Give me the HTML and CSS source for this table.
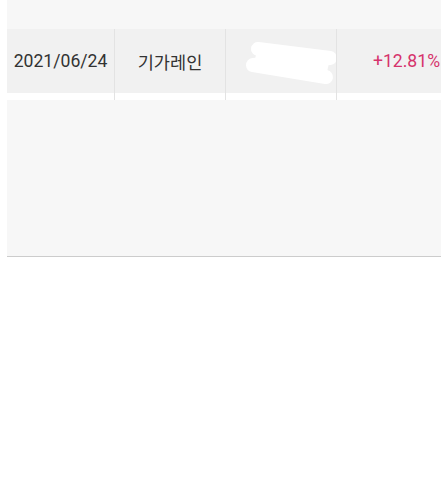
FILE: index.html
```html
<!DOCTYPE html>
<html lang="ko">
<head>
  <meta charset="UTF-8" />
  <meta name="viewport" content="width=device-width, initial-scale=1.0" />
  <title>수익률</title>
  <link rel="stylesheet" href="styles.css">
</head>
<body>
  <div class="page">
    <div class="top-band"></div>
    <div class="result-row">
      <div class="cell"><div class="val">2021/06/24</div></div>
      <div class="cell"><div class="val">기가레인</div></div>
      <div class="cell">
        <div class="val">
          <svg class="blot" viewBox="0 0 110 64" width="110" height="64">
            <polygon points="32,20 104,29 100,48 27,36" fill="#fff"/>
            <polyline points="32,20 104,29 27,36 100,48" fill="none" stroke="#fff" stroke-width="14" stroke-linecap="round" stroke-linejoin="round"/>
          </svg>
        </div>
      </div>
      <div class="cell"><div class="val rate">+12.81%</div></div>
    </div>
    <div class="panel"></div>
  </div>
</body>
</html>
```

FILE: styles.css
```css
body {
  margin: 0;
  padding: 0;
  background: #fff;
  font-family: Roboto, "Noto Sans CJK KR", sans-serif;
}
.page {
  margin-left: 7px;
  overflow: hidden;
}
.top-band {
  height: 29px;
  background: #f7f7f7;
}
.result-row {
  display: grid;
  grid-template-columns: 107px 111px 111px 140px;
}
.cell {
  padding-bottom: 7px;
  border-left: 1px solid #e3e3e3;
}
.cell:first-child {
  border-left: none;
}
.val {
  height: 64px;
  background: #f1f1f1;
  display: flex;
  align-items: center;
  justify-content: center;
  font-size: 17.6px;
  color: #333;
}
.blot {
  display: block;
  overflow: visible;
}
.rate {
  color: #d6336c;
}
.panel {
  height: 156px;
  background: #f7f7f7;
  border-bottom: 1px solid #cccccc;
}
```
